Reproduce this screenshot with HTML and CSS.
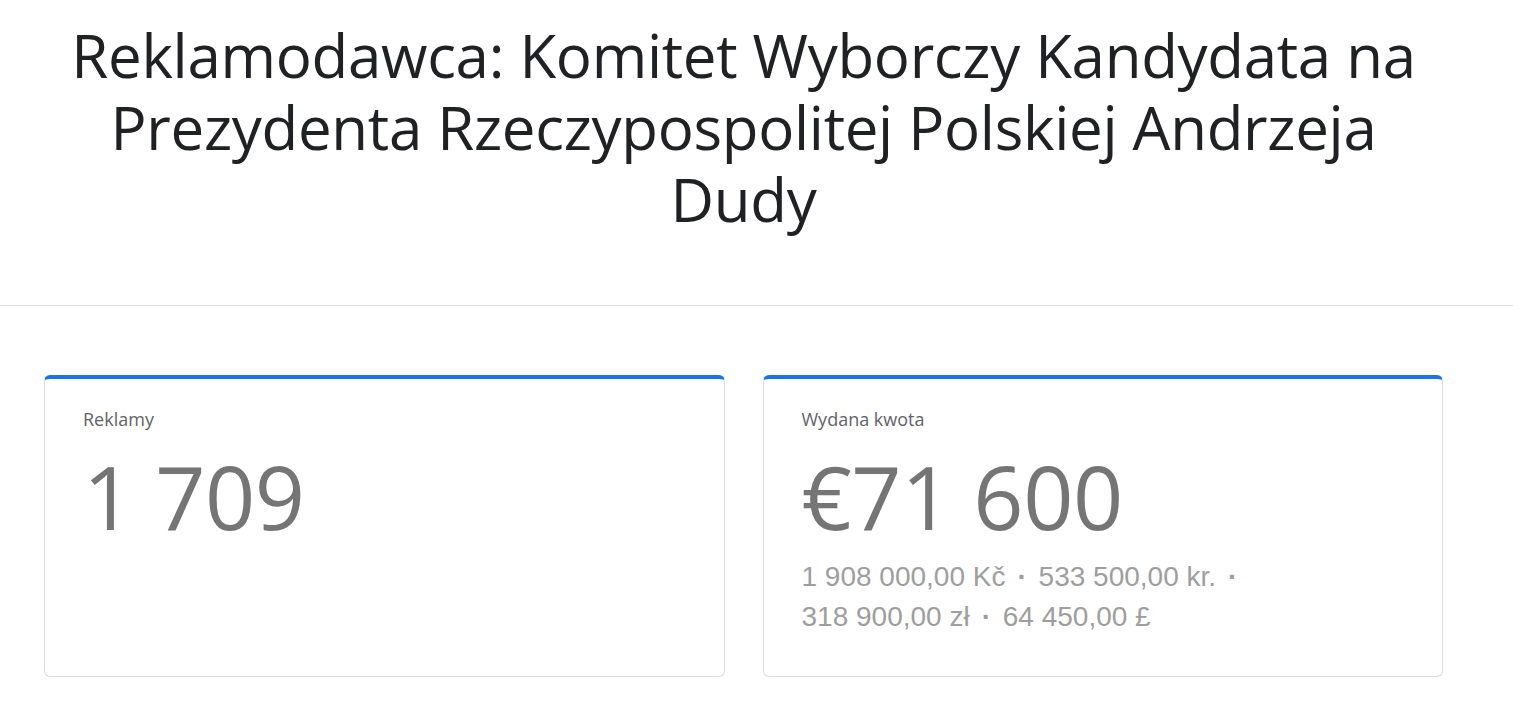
FILE: index.html
```html
<!DOCTYPE html>
<html lang="pl">
<head>
<meta charset="utf-8">
<title>Reklamodawca</title>
<link rel="stylesheet" href="styles.css">
</head>
<body>
<header class="page-header">
  <h1 class="title">Reklamodawca: Komitet Wyborczy Kandydata na<br>Prezydenta Rzeczypospolitej Polskiej Andrzeja<br>Dudy</h1>
</header>
<main class="stats">
  <section class="card">
    <div class="card-label">Reklamy</div>
    <div class="card-value">1&nbsp;709</div>
  </section>
  <section class="card">
    <div class="card-label">Wydana kwota</div>
    <div class="card-value">€71&nbsp;600</div>
    <div class="card-sub">
      <span class="amount">1&nbsp;908&nbsp;000,00&nbsp;Kč</span><span class="sep">·</span>
      <span class="amount">533&nbsp;500,00&nbsp;kr.</span><span class="sep">·</span>
      <span class="amount">318&nbsp;900,00&nbsp;zł</span><span class="sep">·</span>
      <span class="amount">64&nbsp;450,00&nbsp;£</span>
    </div>
  </section>
</main>
</body>
</html>
```
FILE: styles.css
```css
* { box-sizing: border-box; }
html, body { margin: 0; padding: 0; background: #fff; }
body { font-family: "Open Sans", "Noto Sans", sans-serif; }

.page-header {
  padding: 19px 70px 0 44px;
  height: 306px;
  border-bottom: 1px solid #dadce0;
}
.title {
  margin: 0;
  text-align: center;
  font-weight: 400;
  font-size: 60px;
  line-height: 72px;
  color: #202124;
  letter-spacing: -0.3px;
}

.stats {
  display: grid;
  grid-template-columns: 1fr 1fr;
  gap: 38px;
  padding: 69px 70px 0 44px;
}
.card {
  border: 1px solid #dadce0;
  border-top: 4px solid #1a73e8;
  border-radius: 6px;
  padding: 28px 38px 41px 38px;
  height: 302px;
}
.card-label {
  font-size: 18px;
  line-height: 24px;
  color: #5f6368;
}
.card-value {
  margin-top: 15px;
  font-size: 88px;
  line-height: 100px;
  color: #757575;
  letter-spacing: -0.5px;
}
.card-sub {
  margin-top: 11px;
  max-width: 540px;
  font-family: "Liberation Sans", Arial, sans-serif;
  font-size: 28px;
  line-height: 40px;
  color: #9e9e9e;
}
.sep {
  display: inline-block;
  margin: 0 4px 0 12px;
  font-weight: 700;
}
```
